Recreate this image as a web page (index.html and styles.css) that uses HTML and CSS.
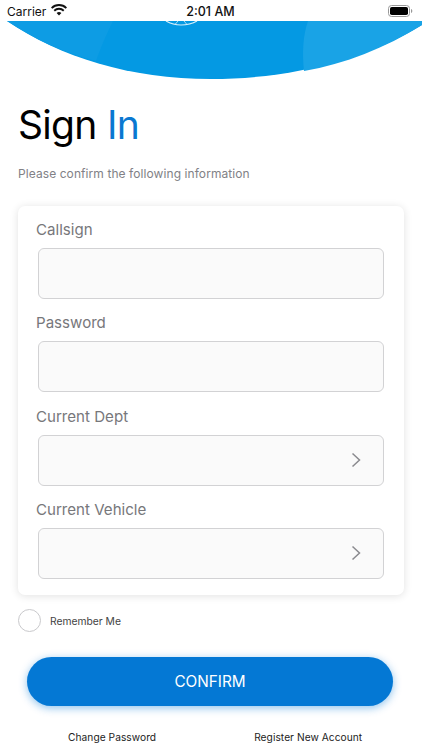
FILE: index.html
```html
<!DOCTYPE html>
<html lang="en">
<head>
<meta charset="utf-8">
<title>Sign In</title>
<link rel="stylesheet" href="styles.css">
</head>
<body>
<div class="status">
  <div class="status-left">
    <span>Carrier</span>
    <svg class="wifi" viewBox="0 0 16 12" width="16" height="12"><path d="M8 11.6 5.6 9.1a3.4 3.4 0 0 1 4.8 0zM3.9 7.4 2.6 6a7.6 7.6 0 0 1 10.8 0l-1.3 1.4a5.8 5.8 0 0 0-8.2 0zM1.3 4.8 0 3.4a11.3 11.3 0 0 1 16 0l-1.3 1.4a9.5 9.5 0 0 0-13.4 0z" fill="#111"/></svg>
  </div>
  <span class="clock">2:01 AM</span>
  <div class="status-right">
    <svg viewBox="0 0 25 12" width="25" height="12"><rect x=".5" y=".5" width="21" height="11" rx="3" fill="none" stroke="#999"/><rect x="2" y="2" width="18" height="8" rx="1.8" fill="#000"/><path d="M23 4v4c.8-.3 1.3-1.1 1.3-2s-.5-1.700-1.300-2z" fill="#999"/></svg>
  </div>
</div>
<svg class="arc" viewBox="0 0 422 60" width="422" height="60">
  <path d="M7 0H422V4C365 39 290 58 211 58C130 58 60 36 7 0Z" fill="#0499e3"/>
  <path d="M7 0H113C106 14 101 26 96 40C62 31 34 18 7 0Z" fill="#0d9ce4"/>
  <path d="M308 0H422V4C385 27 345 43 304 50C302 32 303 14 308 0Z" fill="#19a3e6"/>
  <path d="M166 0C171 3 176 4 181 4C186 4 192 3 197 0" fill="none" stroke="#d5eefa" stroke-width="1.200"/>
  <path d="M175 3.500 178 0M187 3.500 184 0" fill="none" stroke="#d5eefa" stroke-width=".8"/>
</svg>
<main class="page">
  <h1 class="title">Sign <span class="accent">In</span></h1>
  <p class="subtitle">Please confirm the following information</p>
  <section class="card">
    <div class="field">
      <div class="label">Callsign</div>
      <div class="box"></div>
    </div>
    <div class="field">
      <div class="label">Password</div>
      <div class="box"></div>
    </div>
    <div class="field">
      <div class="label">Current Dept</div>
      <div class="box select"><svg class="chev" viewBox="0 0 10 16" width="10" height="16"><path d="M1.500 1.500 8.500 8 1.500 14.500" fill="none" stroke="#8a8a8e" stroke-width="1.500"/></svg></div>
    </div>
    <div class="field">
      <div class="label">Current Vehicle</div>
      <div class="box select"><svg class="chev" viewBox="0 0 10 16" width="10" height="16"><path d="M1.500 1.500 8.500 8 1.500 14.500" fill="none" stroke="#8a8a8e" stroke-width="1.500"/></svg></div>
    </div>
  </section>
  <div class="remember">
    <span class="radio"></span>
    <span>Remember Me</span>
  </div>
  <button class="confirm" type="button">CONFIRM</button>
  <div class="links">
    <span>Change Password</span>
    <span>Register New Account</span>
  </div>
</main>
</body>
</html>
```
FILE: styles.css
```css
* { box-sizing: border-box; }
html, body { margin: 0; padding: 0; }
body {
  width: 422px;
  height: 750px;
  overflow: hidden;
  background: #fff;
  font-family: Inter, "Liberation Sans", sans-serif;
  color: #000;
}
.status {
  height: 21px;
  display: grid;
  grid-template-columns: 1fr auto 1fr;
  align-items: center;
  padding: 1px 9px 0 7px;
  font-size: 12px;
  color: #111;
}
.status-left { display: flex; align-items: center; gap: 5px; }
.wifi { margin-top: -3px; }
.clock { font-weight: 500; font-size: 12.500px; margin-left: 1px; }
.status-right { display: flex; justify-content: flex-end; }
.arc { display: block; }
.page { padding: 0 18px; }
.title {
  margin: 19px 0 0;
  font-size: 39px;
  line-height: 50px;
  font-weight: 400;
  letter-spacing: -0.700px;
}
.accent { color: #0a78d1; }
.subtitle {
  margin: 16px 0 0;
  font-size: 12px;
  line-height: 16px;
  letter-spacing: .08px;
  color: #818186;
}
.card {
  margin-top: 24px;
  width: 386px;
  height: 389px;
  padding: 12px 20px 0;
  background: #fff;
  border-radius: 7px;
  box-shadow: 0 1px 8px rgba(0,0,0,.12);
}
.field { height: 93.300px; }
.label {
  font-size: 15.100px;
  line-height: 24px;
  color: #77777b;
  margin-left: -2px;
}
.box {
  margin-top: 6px;
  width: 346px;
  height: 51px;
  background: #fafafa;
  border: 1.500px solid #d2d2d4;
  border-radius: 6px;
  display: flex;
  align-items: center;
  justify-content: flex-end;
  padding-right: 22px;
}
.remember {
  margin-top: 14px;
  display: flex;
  align-items: center;
  gap: 9px;
  font-size: 10.300px;
  color: #444;
}
.radio {
  width: 23px;
  height: 23px;
  border-radius: 50%;
  border: 1px solid #c9c9cc;
  background: #fff;
}
.confirm {
  display: block;
  margin: 25px 0 0 9px;
  width: 366px;
  height: 49px;
  border: 0;
  border-radius: 25px;
  background: #0478d4;
  color: #fff;
  font-family: inherit;
  font-size: 15.300px;
  box-shadow: 0 2px 8px rgba(4,120,212,.45);
}
.links {
  margin-top: 24px;
  display: flex;
  padding-left: 50px;
  gap: 98px;
  font-size: 10.200px;
  line-height: 14px;
  letter-spacing: .05px;
  color: #222;
}
```
